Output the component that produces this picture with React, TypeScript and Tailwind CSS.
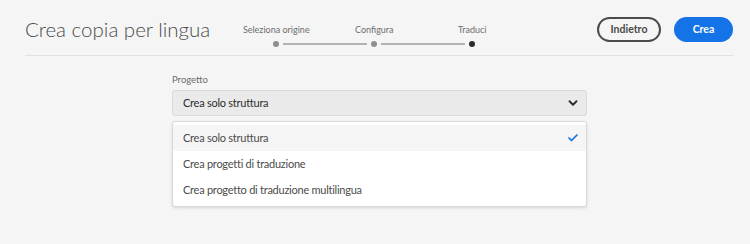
import { ChevronDown, Check } from "lucide-react";

const steps = ["Seleziona origine", "Configura", "Traduci"];

const options = [
  "Crea solo struttura",
  "Crea progetti di traduzione",
  "Crea progetto di traduzione multilingua",
];

const App = () => {
  return (
    <div className="w-[750px] h-[244px] bg-[#f5f5f5] font-['Lato',sans-serif] text-[#4b4b4b] overflow-hidden">
      {/* Header */}
      <div className="ml-[25px] mr-[17px] h-[56px] border-b border-[#e1e1e1] flex items-start">
        <h1 className="mt-[15px] text-[20.5px] leading-[28px] font-light text-[#4b4b4b]">
          Crea copia per lingua
        </h1>

        {/* Stepper */}
        <div className="ml-[17px] mt-[24px] w-[294px]">
          <div className="grid grid-cols-3 text-[9px] leading-[12px] text-[#6e6e6e] text-center">
            {steps.map((s) => (
              <span key={s}>{s}</span>
            ))}
          </div>
          <div className="mt-[5px] px-[46px] flex items-center">
            <span className="w-[6px] h-[6px] rounded-full bg-[#8e8e8e]" />
            <span className="flex-1 h-[2px] mx-[4px] bg-[#b3b3b3]" />
            <span className="w-[6px] h-[6px] rounded-full bg-[#8e8e8e]" />
            <span className="flex-1 h-[2px] mx-[4px] bg-[#b3b3b3]" />
            <span className="w-[6px] h-[6px] rounded-full bg-[#2c2c2c]" />
          </div>
        </div>

        {/* Actions */}
        <div className="ml-auto mt-[17px] flex gap-[13px]">
          <button className="w-[64px] h-[25px] rounded-full border-2 border-[#4b4b4b] text-[10.5px] font-bold text-[#4b4b4b]">
            Indietro
          </button>
          <button className="w-[59px] h-[25px] rounded-full bg-[#1473e6] text-[10.5px] font-bold text-white">
            Crea
          </button>
        </div>
      </div>

      {/* Form */}
      <div className="ml-[172px] w-[415px] pt-[18px]">
        <label className="block text-[9.5px] leading-[12px] text-[#6e6e6e]">Progetto</label>
        <div className="mt-[4px] h-[26px] rounded-[3px] border border-[#dadada] bg-[#eaeaea] flex items-center pl-[10px] pr-[6px]">
          <span className="flex-1 text-[11px] tracking-[-0.25px] text-[#2c2c2c]">Crea solo struttura</span>
          <ChevronDown className="w-[14px] h-[14px] text-[#2c2c2c]" strokeWidth={3.2} />
        </div>

        <div className="mt-[5px] py-[3px] rounded-[3px] border border-[#dadada] bg-white shadow-[0_1px_3px_rgba(0,0,0,0.12)]">
          {options.map((o, i) => (
            <div
              key={o}
              className={`h-[26px] flex items-center pl-[10px] pr-[7px] ${i === 0 ? "bg-[#f5f5f5]" : ""}`}
            >
              <span className="flex-1 text-[11px] tracking-[-0.25px] text-[#4b4b4b]">{o}</span>
              {i === 0 && <Check className="w-[12px] h-[12px] text-[#1473e6]" strokeWidth={3.5} />}
            </div>
          ))}
        </div>
      </div>
    </div>
  );
};

export default App;
